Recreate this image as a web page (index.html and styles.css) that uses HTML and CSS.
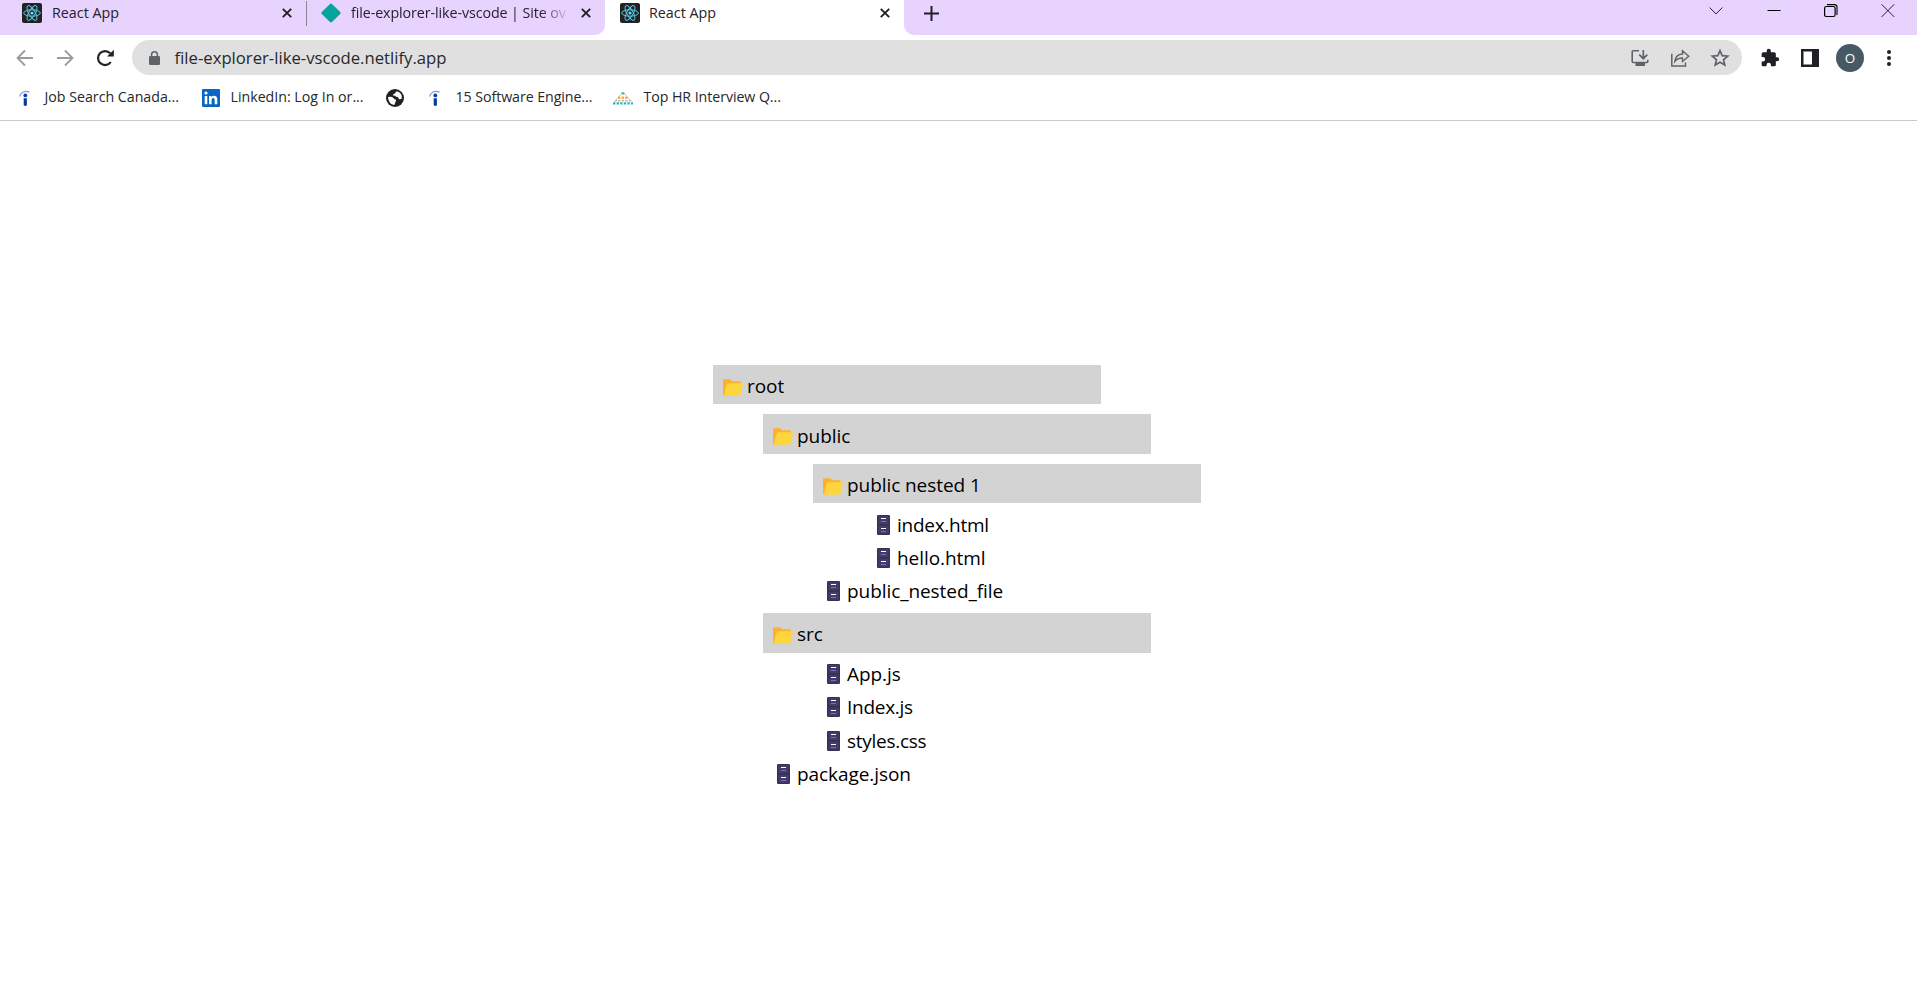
FILE: index.html
```html
<!DOCTYPE html>
<html lang="en">
<head>
<meta charset="utf-8">
<title>React App</title>
<link rel="stylesheet" href="styles.css">
</head>
<body>
<svg class="sprite" aria-hidden="true">
  <symbol id="react" viewBox="0 0 20 20">
    <rect width="20" height="20" rx="2" fill="#222"/>
    <g fill="none" stroke="#5cc8e4" stroke-width="1">
      <ellipse cx="10" cy="10" rx="8.3" ry="3.2"/>
      <ellipse cx="10" cy="10" rx="8.3" ry="3.2" transform="rotate(60 10 10)"/>
      <ellipse cx="10" cy="10" rx="8.3" ry="3.2" transform="rotate(120 10 10)"/>
    </g>
    <circle cx="10" cy="10" r="1.6" fill="#61dafb"/>
  </symbol>
  <symbol id="cross" viewBox="0 0 10 10"><path d="M.8.8l8.4 8.4M9.2.8L.8 9.2" fill="none" stroke="#1f1f24" stroke-width="1.9"/></symbol>
  <symbol id="indeed" viewBox="0 0 12 17">
    <path d="M.6 6.5C1.5 2.300 6 .2 10.500 2.100" fill="none" stroke="#7f9bd0" stroke-width="1.300"/>
    <circle cx="6.300" cy="5.400" r="1.900" fill="#0a3a9c"/>
    <path d="M4.700 8.200h3.200V15.200q-1.600 1.400-3.200 0z" fill="#0a3a9c"/>
  </symbol>
  <symbol id="folder" viewBox="0 0 20 17">
    <path d="M0 1.500Q0 .2 1.300.2H7q.8 0 1.200.8l.7 1.300H16.500q1.300 0 1.300 1.300V8L4 16.700H2Q0 16.700 0 14.700z" fill="#ffb02e"/>
    <path d="M5.600 4.300H18.700q1.500 0 1.200 1.400l-2.200 9.400q-.4 1.600-2 1.600H2Q.8 16.700 1.100 15.400L3.500 6q.4-1.700 2.100-1.700z" fill="#fcd53f"/>
  </symbol>
  <symbol id="cabinet" viewBox="0 0 13 20">
    <rect width="13" height="20" rx="1.200" fill="#37324a"/>
    <path d="M1.300 1h10.400v8H1.300zM1.300 10.800h10.400v8H1.300z" fill="#433b6b"/>
    <path d="M4 3.500h5M4 13.500h5" stroke="#fff" stroke-width="1.200"/>
    <path d="M4 6.500h5M4 16.500h5" stroke="#8d65c5" stroke-width="1"/>
  </symbol>
</svg>

<header class="browser">
  <div class="tabstrip">
    <div class="tabs-left">
      <div class="tab first">
        <svg class="fav"><use href="#react"/></svg><span class="title">React App</span>
        <svg class="close"><use href="#cross"/></svg>
      </div>
      <i class="divider"></i>
      <div class="tab second">
        <svg class="fav" viewBox="0 0 20 20"><path d="M9 .9q1-.9 2 0l8.200 8.100q.9 1 0 2L11 19.100q-1 .9-2 0L.8 11q-.9-1 0-2z" fill="#05a39c"/></svg>
        <span class="title faded">file-explorer-like-vscode | Site ov</span>
        <svg class="close"><use href="#cross"/></svg>
      </div>
    </div>
    <div class="tab active">
      <svg class="fav"><use href="#react"/></svg><span class="title">React App</span>
      <svg class="close"><use href="#cross"/></svg>
    </div>
    <div class="tabs-right">
      <svg class="plus" viewBox="0 0 15 15"><path d="M7.500 0v15M0 7.500h15" stroke="#1f1f24" stroke-width="2"/></svg>
      <div class="window-controls">
        <svg viewBox="0 0 14 14"><path d="M.6 3.500l6.400 6.400L13.400 3.500" fill="none" stroke="#222" stroke-width="1"/></svg>
        <svg viewBox="0 0 14 14"><path d="M.5 6.500h13" stroke="#000"/></svg>
        <svg viewBox="0 0 14 14"><rect x=".6" y="2.500" width="10.500" height="10" rx="1.800" fill="none" stroke="#000" stroke-width="1.200"/><path d="M3 .6h7.400q2.600 0 2.600 2.600V11" fill="none" stroke="#000" stroke-width="1.100"/></svg>
        <svg viewBox="0 0 14 14"><path d="M.6.3l12.600 12.600M13.200.3L.6 12.900" stroke="#222"/></svg>
      </div>
    </div>
  </div>

  <div class="toolbar">
    <div class="nav">
      <svg viewBox="0 0 18 18"><path d="M17 9H1.800M9 1.500L1.500 9 9 16.500" fill="none" stroke="#9b9b9b" stroke-width="1.800"/></svg>
      <svg viewBox="0 0 18 18"><path d="M1 9h15.200M9 1.500L16.500 9 9 16.500" fill="none" stroke="#9b9b9b" stroke-width="1.800"/></svg>
      <svg viewBox="0 0 18 18"><path d="M14.800 13A7 7 0 1 1 14.200 4.300" fill="none" stroke="#202124" stroke-width="2.200"/><path d="M17.800.8V7.500H11z" fill="#202124"/></svg>
    </div>
    <div class="omnibox">
      <svg class="lock" viewBox="0 0 11 14"><rect y="5" width="11" height="9" rx="1.200" fill="#5f6368"/><path d="M2.600 6V3.700a2.900 2.900 0 0 1 5.800 0V6" fill="none" stroke="#5f6368" stroke-width="1.500"/></svg>
      <span class="url">file-explorer-like-vscode.netlify.app</span>
      <div class="page-actions">
        <svg viewBox="0 0 20 20"><path d="M9 2.800H3.200q-1 0-1 1v9.700q0 1 1 1h13.600q1 0 1-1v-1.700" fill="none" stroke="#5f6368" stroke-width="1.600"/><path d="M5.500 14.500h9.500V18h-9.500z" fill="#5f6368"/><path d="M13.300 2v8M9.300 6.700l4 4 4-4" fill="none" stroke="#5f6368" stroke-width="1.700"/></svg>
        <svg viewBox="0 0 20 20"><path d="M1.800 5.800V18h13.700v-3.500" fill="none" stroke="#5f6368" stroke-width="1.500"/><path d="M4.800 13.500Q5.500 6.500 12.500 6V2.800l6.200 5.400-6.200 5.300V10Q7.500 10 4.800 13.500z" fill="none" stroke="#5f6368" stroke-width="1.400"/></svg>
        <svg viewBox="0 0 20 20"><path d="M10 2.700l2.200 5 5.500.5-4.200 3.600 1.300 5.300L10 14.300l-4.800 2.800 1.300-5.300L2.300 8.200l5.500-.5z" fill="none" stroke="#5f6368" stroke-width="1.700"/></svg>
      </div>
    </div>
    <div class="extensions">
      <svg viewBox="0 0 24 24"><path d="M20.500 11H19V7c0-1.100-.9-2-2-2h-4V3.500a2.500 2.500 0 0 0-5 0V5H4c-1.100 0-2 .9-2 2v3.800h1.500a2.700 2.700 0 0 1 0 5.400H2V20c0 1.100.9 2 2 2h3.800v-1.500a2.700 2.700 0 0 1 5.400 0V22H17c1.100 0 2-.9 2-2v-4h1.500a2.500 2.500 0 0 0 0-5z" fill="#202124"/></svg>
      <svg viewBox="0 0 20 20"><path d="M1 1h18v18H1zM3.500 3.500v13h8.500v-13z" fill="#202124" fill-rule="evenodd"/></svg>
      <span class="avatar">O</span>
      <svg viewBox="0 0 20 20"><circle cx="10" cy="4" r="2" fill="#202124"/><circle cx="10" cy="10" r="2" fill="#202124"/><circle cx="10" cy="16" r="2" fill="#202124"/></svg>
    </div>
  </div>

  <nav class="bookmarks">
    <div class="bm b1"><svg class="ind"><use href="#indeed"/></svg><span>Job Search Canada...</span></div>
    <div class="bm b2"><svg class="sq" viewBox="0 0 18 18"><rect width="18" height="18" rx="1" fill="#0a66c2"/><g fill="#fff"><circle cx="4" cy="4" r="1.600"/><path d="M2.700 7h2.600v8.300H2.700zM7 7h2.500v1.200Q10.300 6.800 12 6.800q3.300 0 3.300 3.700v4.800h-2.600v-4.300q0-2-1.500-2-1.600 0-1.600 2v4.300H7z"/></g></svg><span>LinkedIn: Log In or...</span></div>
    <div class="bm b3"><svg class="sq" viewBox="0 0 18 18"><circle cx="9" cy="9" r="9" fill="#202124"/><path d="M2 8q3.500-.8 5.500 1 .5 1.600 2.300 1.600.8 1.400-.4 2.400l-1 2.900Q2.500 15.300 2 8zM11 2.200Q9 3 9.300 4.500 7 4.300 6.800 6.500q2.500-.4 3.200 1.300 2.400-.3 3 2.400l2.700-.3Q17 4.500 11 2.200z" fill="#fff"/></svg></div>
    <div class="bm b4"><svg class="ind"><use href="#indeed"/></svg><span>15 Software Engine...</span></div>
    <div class="bm b5"><svg class="pyr" viewBox="0 0 20 14"><path d="M10 1L3 9M10 1l7 8" stroke="#b9b9b9" stroke-dasharray="2 1"/><path d="M8.500 2.500h3" stroke="#3bb5c4" stroke-width="2"/><g stroke-width="2.400" stroke-dasharray="2.400 1.200"><path d="M5 6.700h10.500" stroke="#f3aa4b"/><path d="M1.500 9.700h17" stroke="#b8b8ae" stroke-width="1.500"/><path d="M0 12.400h20" stroke="#31b4bd"/></g></svg><span>Top HR Interview Q...</span></div>
  </nav>
</header>

<main class="page">
  <div class="folder"><svg><use href="#folder"/></svg><span>root</span></div>
  <div class="children">
    <div class="folder"><svg><use href="#folder"/></svg><span>public</span></div>
    <div class="children">
      <div class="folder"><svg><use href="#folder"/></svg><span>public nested 1</span></div>
      <div class="children">
        <div class="file tight"><svg><use href="#cabinet"/></svg><span>index.html</span></div>
        <div class="file"><svg><use href="#cabinet"/></svg><span>hello.html</span></div>
      </div>
      <div class="file"><svg><use href="#cabinet"/></svg><span>public_nested_file</span></div>
    </div>
    <div class="folder"><svg><use href="#folder"/></svg><span>src</span></div>
    <div class="children">
      <div class="file"><svg><use href="#cabinet"/></svg><span>App.js</span></div>
      <div class="file tight"><svg><use href="#cabinet"/></svg><span>Index.js</span></div>
      <div class="file tight"><svg><use href="#cabinet"/></svg><span>styles.css</span></div>
    </div>
    <div class="file"><svg><use href="#cabinet"/></svg><span>package.json</span></div>
  </div>
</main>
</body>
</html>
```
FILE: styles.css
```css
* { box-sizing: border-box; }
body {
  margin: 0;
  background: #fff;
  color: #000;
  font-family: "Open Sans", "Noto Sans", sans-serif;
}
svg { display: block; flex: none; }
.sprite { display: none; }
.browser { height: 121px; border-bottom: 1px solid #c9c9c9; }

.tabstrip { display: flex; height: 35px; background: #fff; }
.tabs-left { display: flex; width: 605px; background: #e8d3ff; border-bottom-right-radius: 10px; }
.tabs-right { display: flex; flex: 1; justify-content: space-between; padding: 0 22px 0 19px; background: #e8d3ff; border-bottom-left-radius: 10px; }
.tab { display: flex; align-items: center; height: 26px; }
.first { width: 306px; padding: 0 14px 0 22px; }
.second { width: 298px; padding: 0 14px 0 14px; }
.active { width: 299px; padding: 0 15px; }
.active .close { margin-right: -1px; }
.divider { width: 1px; height: 25px; margin-top: 1px; background: #8d8397; }
.fav { width: 20px; height: 20px; }
.title { margin-left: 10px; font-size: 14.300px; line-height: 20px; color: #26222c; white-space: nowrap; }
.active .title { margin-left: 9px; }
.faded { letter-spacing: -.1px; -webkit-mask-image: linear-gradient(90deg, #000 190px, transparent 219px); mask-image: linear-gradient(90deg, #000 190px, transparent 219px); }
.close { width: 10px; height: 10px; margin-left: auto; }
.plus { width: 15px; height: 15px; margin: 6px 0 0 1px; }
.window-controls { display: flex; gap: 43px; padding-top: 4px; }
.window-controls svg { width: 14px; height: 14px; }
.window-controls svg:first-child { margin-right: 1px; }

.toolbar { display: flex; align-items: center; height: 45px; }
.nav { display: flex; flex: none; gap: 22px; padding-left: 16px; width: 132px; }
.nav svg { width: 18px; height: 18px; }
.omnibox { display: flex; flex: none; align-items: center; width: 1610px; height: 35px; padding: 0 12px 0 17px; border-radius: 18px; background: #e0e0e0; }
.lock { width: 11px; height: 14px; }
.url { margin-left: 14.500px; font-size: 16.700px; line-height: 24px; color: #27282b; }
.page-actions { display: flex; gap: 20px; margin-left: auto; }
.page-actions svg { width: 20px; height: 20px; }
.extensions { display: flex; align-items: center; padding-left: 18px; }
.extensions svg { width: 20px; height: 20px; margin-right: 20px; }
.extensions svg:nth-of-type(2) { margin-right: 16px; }
.extensions svg:last-child { margin-right: 0; }
.avatar { width: 28px; height: 28px; margin-right: 15px; border-radius: 50%; background: #455a64; color: #fff; font-size: 13.500px; line-height: 28px; text-align: center; }

.bookmarks { display: flex; align-items: center; height: 36px; padding-left: 19px; font-size: 14.200px; line-height: 20px; color: #26272a; }
.bm { display: flex; align-items: center; white-space: nowrap; }
.bm span { margin: -2px 0 0 -.5px; }
.ind { width: 12px; height: 17px; }
.sq { width: 18px; height: 18px; }
.pyr { width: 20px; height: 14px; }
.b1 { width: 183px; gap: 14px; }
.b2 { width: 184px; gap: 11px; }
.b3 { width: 43px; }
.b4 { width: 184px; gap: 15px; letter-spacing: -.06px; }
.b5 { gap: 11px; letter-spacing: -.06px; }

.page { width: 388px; margin: 243.800px 0 0 713px; font-size: 19px; line-height: 26px; letter-spacing: -.07px; }
.children { padding-left: 50px; }
.folder { display: flex; align-items: center; gap: 4px; width: 388px; height: 39.500px; margin-top: 10px; padding: 3px 10px 0; background: #d3d3d3; white-space: nowrap; }
.folder svg { width: 20px; height: 17px; margin-top: 2px; }
.file { display: flex; align-items: center; height: 33.250px; padding: 10px 0 0 14px; gap: 7px; white-space: nowrap; }
.file svg { width: 13px; height: 20px; }
.tight { letter-spacing: -.27px; }
```
